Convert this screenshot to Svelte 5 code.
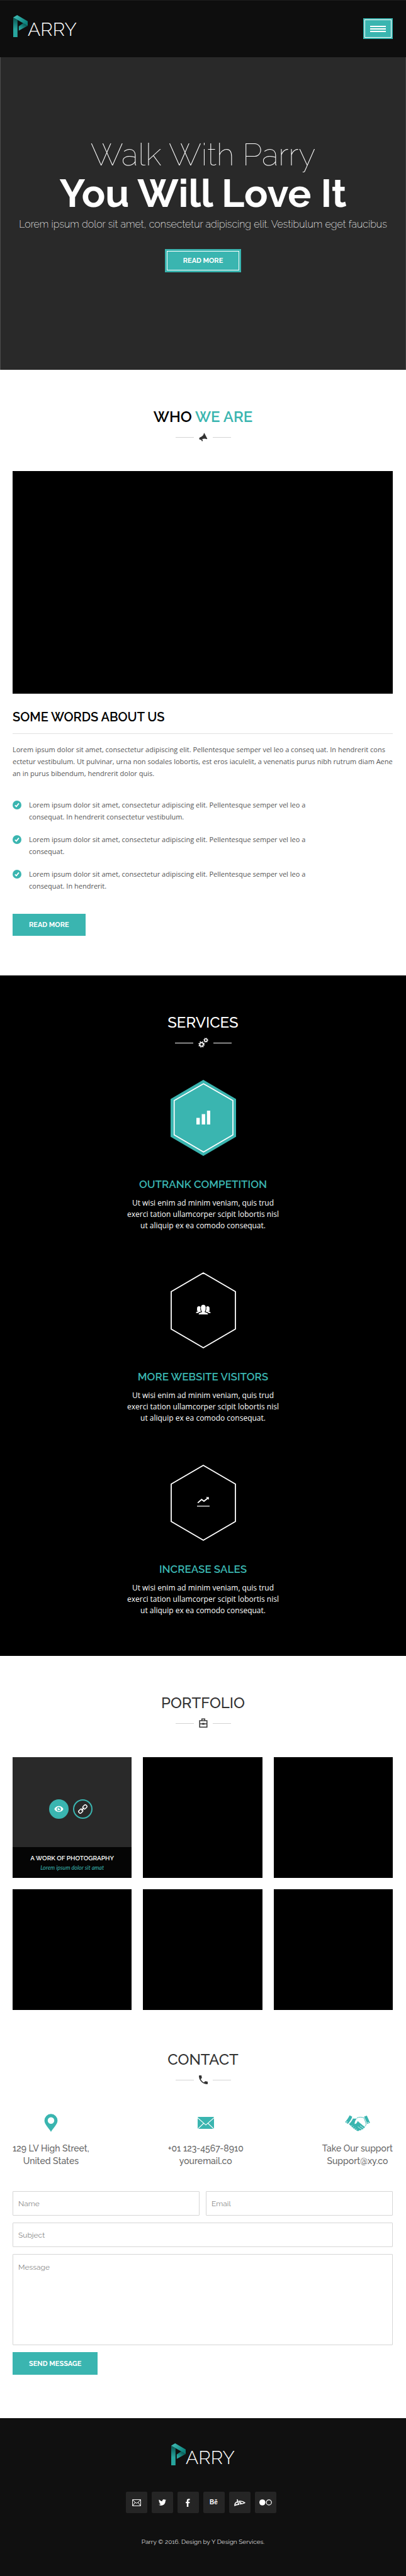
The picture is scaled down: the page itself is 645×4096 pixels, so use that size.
<script>
  const points = [
    ['Lorem ipsum dolor sit amet, consectetur adipiscing elit. Pellentesque semper vel leo a', 'consequat. In hendrerit consectetur vestibulum.'],
    ['Lorem ipsum dolor sit amet, consectetur adipiscing elit. Pellentesque semper vel leo a', 'consequat.'],
    ['Lorem ipsum dolor sit amet, consectetur adipiscing elit. Pellentesque semper vel leo a', 'consequat. In hendrerit.']
  ];
  const services = [
    { icon: 'bars', title: 'Outrank competition' },
    { icon: 'people', title: 'More website visitors' },
    { icon: 'trend', title: 'Increase sales' }
  ];
  const contacts = [
    { icon: 'pin', lines: ['129 LV High Street,', 'United States'] },
    { icon: 'mail', lines: ['+01 123-4567-8910', 'youremail.co'] },
    { icon: 'hands', lines: ['Take Our support', 'Support@xy.co'] }
  ];
  const socials = ['Email', 'Twitter', 'Facebook', 'Behance', 'DeviantArt', 'Flickr'];
</script>

{#snippet logo(id)}
  <a class="logo" href="#top" aria-label="Parry">
    <svg width="23" height="35" viewBox="0 0 81 123" aria-hidden="true">
      <defs>
        <linearGradient id="{id}-stem" x1="0" y1="0" x2="0" y2="1">
          <stop offset="0.1" stop-color="#0c615c" />
          <stop offset="0.6" stop-color="#27a59e" />
        </linearGradient>
        <linearGradient id="{id}-top" x1="0" y1="0" x2="1" y2="0.6">
          <stop offset="0.1" stop-color="#3fbcb5" />
          <stop offset="1" stop-color="#0b817b" />
        </linearGradient>
        <linearGradient id="{id}-fold" x1="1" y1="0" x2="0" y2="1">
          <stop offset="0.2" stop-color="#0a5a56" />
          <stop offset="0.8" stop-color="#27a59e" />
        </linearGradient>
      </defs>
      <path d="M0 13 24 27V123H0Z" fill="url(#{id}-stem)" />
      <path d="M56 45 81 60 31 87V62Z" fill="url(#{id}-fold)" />
      <path d="M0 13 22 0 81 34V60Z" fill="url(#{id}-top)" />
    </svg>
    <span>ARRY</span>
  </a>
{/snippet}

<header class="bar" id="top">
  {@render logo('head')}
  <button class="menu" aria-label="Menu"><span></span><span></span><span></span></button>
</header>

<section class="hero">
  <h1><span class="thin">Walk With Parry</span><span class="heavy">You Will Love It</span></h1>
  <p>Lorem ipsum dolor sit amet, consectetur adipiscing elit. Vestibulum eget faucibus</p>
  <a class="btn framed" href="#about"><span>READ MORE</span></a>
</section>

<main>
  <section id="about">
    <div class="title strong">
      <h2>WHO <em>WE ARE</em></h2>
      <div class="rule">
        <svg width="14" height="14" viewBox="0 0 14 14" aria-hidden="true">
          <path d="M8.6 0.4 13.4 9.8 12.3 10.2C9.6 9 7.3 9.3 5.2 10.3L6.4 13 4.9 13.7 3.3 11C1.8 11.6 0.6 10.8 0.5 9.4 0.4 8.1 1.2 7.3 2.6 6.9 5.4 5.9 7.4 4.2 8 0.8Z" fill="#333" />
        </svg>
      </div>
    </div>
    <div class="wrap">
      <div class="video"></div>
      <h3>SOME WORDS ABOUT US</h3>
      <p class="copy">
        Lorem ipsum dolor sit amet, consectetur adipiscing elit. Pellentesque semper vel leo a conseq uat. In hendrerit cons<br />
        ectetur vestibulum. Ut pulvinar, urna non sodales lobortis, est eros iaculelit, a venenatis purus nibh rutrum diam Aene<br />
        an in purus bibendum, hendrerit dolor quis.
      </p>
      <ul class="points">
        {#each points as [first, second]}
          <li>
            <svg width="14" height="14" viewBox="0 0 14 14" aria-hidden="true">
              <circle cx="7" cy="7" r="7" fill="#3ab5b0" />
              <path d="M3.8 7.3 6 9.4 10 4.4" fill="none" stroke="#fff" stroke-width="1.8" />
            </svg>
            <span>{first}<br />{second}</span>
          </li>
        {/each}
      </ul>
      <a class="btn" href="#about">READ MORE</a>
    </div>
  </section>

  <section class="services">
    <div class="title light">
      <h2>SERVICES</h2>
      <div class="rule">
        <svg width="16" height="16" viewBox="0 0 16 16" fill="none" stroke="#fff" aria-hidden="true">
          <circle cx="5.2" cy="10.7" r="2.8" stroke-width="1.7" />
          <circle cx="5.2" cy="10.7" r="4.3" stroke-width="1.5" stroke-dasharray="1.69" />
          <circle cx="12" cy="3.9" r="2.1" stroke-width="1.5" />
          <circle cx="12" cy="3.9" r="3.2" stroke-width="1.2" stroke-dasharray="1.26" />
        </svg>
      </div>
    </div>
    <ul>
      {#each services as s}
        <li>
          <svg class="hex" width="104" height="121" viewBox="0 0 104 121" aria-hidden="true">
            {#if s.icon === 'bars'}
              <path d="M52 0 104 30.5V90.5L52 121 0 90.5V30.5Z" fill="#3ab5b0" />
              <path d="M52.3 6.2 99 33V87.5L52.3 114.8 5.7 87.5V33Z" fill="none" stroke="#fff" stroke-width="1.7" />
              <path d="M41 60.5h5.4V71H41ZM49.5 54.5h5.5V71h-5.5ZM57.8 49h5.2V71h-5.2Z" fill="#fff" />
            {:else}
              <path d="M52 1 103 30.7V90.3L52 120 1 90.3V30.7Z" fill="none" stroke="#fff" stroke-width="1.8" />
              {#if s.icon === 'people'}
                <g fill="#fff">
                  <path d="M44.5 67c.3-2.2 2-2.7 5.2-3.4v-1.5c-1-1-1.2-2.2-1.3-3.2-.7-4.5.4-7.2 3.6-7.2s4.3 2.7 3.6 7.2c-.1 1-.3 2.2-1.3 3.2v1.5c3.2.7 4.9 1.2 5.2 3.4Z" />
                  <path d="M40.3 64.7c.2-1.6 1.2-2 3.3-2.4v-.8c-1 0-1.9-.2-1.9-.5.8-1 .2-2.7.4-4.2.2-1.8 1.3-2.8 2.8-2.8 1.3 0 2.2.6 2.6 1.8-.7 2.2-.2 4.700.9 6.6-2 .5-3.600 1-4.600 2.300Z" />
                  <path d="M63.700 64.700c-.2-1.600-1.200-2-3.300-2.400v-.8c1 0 1.900-.2 1.900-.5-.8-1-.2-2.700-.4-4.200-.2-1.800-1.300-2.800-2.800-2.800-1.300 0-2.200.6-2.600 1.800.7 2.200.2 4.700-.9 6.600 2 .5 3.600 1 4.600 2.300Z" />
                </g>
              {:else}
                <path d="M43.2 60.6 49.3 55.2 53 58 59 53.2" fill="none" stroke="#fff" stroke-width="1.9" />
                <path d="M56 51.5h4.8v4.3ZM42 65.2h20v1.3H42Z" fill="#fff" />
              {/if}
            {/if}
          </svg>
          <h3>{s.title}</h3>
          <p>Ut wisi enim ad minim veniam, quis trud<br />exerci tation ullamcorper scipit lobortis nisl<br />ut aliquip ex ea comodo consequat.</p>
        </li>
      {/each}
    </ul>
  </section>

  <section class="portfolio">
    <div class="title">
      <h2>PORTFOLIO</h2>
      <div class="rule">
        <svg width="14" height="16" viewBox="0 0 14 16" aria-hidden="true">
          <path d="M1.2 4h11.6v10.3H1.2ZM4.7 3.8V1.2h4.6v2.6M1 9h12" fill="none" stroke="#333" stroke-width="1.5" />
          <rect x="5.2" y="7.6" width="3.6" height="2.8" fill="#333" />
        </svg>
      </div>
    </div>
    <div class="wrap grid">
      <article class="tile open">
        <div class="acts">
          <a class="round solid" href="#view" aria-label="View">
            <svg width="15" height="15" viewBox="0 0 24 24" aria-hidden="true">
              <path d="M12 4.5C7 4.5 2.7 7.6.5 12c2.200 4.400 6.500 7.500 11.500 7.500s9.300-3.100 11.500-7.500C21.300 7.600 17 4.500 12 4.500Z" fill="#fff" />
              <circle cx="12" cy="12" r="5.400" fill="#3ab5b0" />
              <circle cx="12" cy="12" r="3.200" fill="#fff" />
              <path d="M12 12V8h4v4Z" fill="#3ab5b0" />
            </svg>
          </a>
          <a class="round" href="#link" aria-label="Link">
            <svg width="15" height="15" viewBox="0 0 24 24" aria-hidden="true">
              <g transform="rotate(-45 12 12)" fill="none" stroke="#fff" stroke-width="2.4">
                <rect x="-1" y="8" width="11" height="8" rx="3.5" />
                <rect x="14" y="8" width="11" height="8" rx="3.5" />
                <path d="M7 12h10" />
              </g>
            </svg>
          </a>
        </div>
        <div class="cap"><h3>A WORK OF PHOTOGRAPHY</h3><p>Lorem ipsum dolor sit amat</p></div>
      </article>
      {#each [2, 3, 4, 5, 6] as n (n)}<article class="tile"></article>{/each}
    </div>
  </section>

  <section class="contact">
    <div class="title">
      <h2>CONTACT</h2>
      <div class="rule">
        <svg width="14" height="14" viewBox="3 3 18 18" aria-hidden="true">
          <path d="M6.62 10.79c1.44 2.83 3.76 5.14 6.59 6.59l2.2-2.2c.27-.27.67-.36 1.02-.24 1.12.37 2.33.57 3.57.57.55 0 1 .45 1 1V20c0 .55-.45 1-1 1-9.39 0-17-7.61-17-17 0-.55.45-1 1-1h3.5c.55 0 1 .45 1 1 0 1.25.2 2.45.57 3.57.11.35.03.74-.25 1.02l-2.2 2.2z" fill="#333" />
        </svg>
      </div>
    </div>
    <div class="wrap">
      <ul class="ways">
        {#each contacts as c}
          <li>
            {#if c.icon === 'pin'}
              <svg width="22" height="29" viewBox="0 0 22 29" aria-hidden="true"><path d="M11 .3A10.4 10.4 0 0 0 .6 10.8C.6 17 7 22 11 28.7 15 22 21.4 17 21.4 10.8A10.4 10.4 0 0 0 11 .3ZM11 5.6a5.2 5.2 0 1 1 0 10.4 5.2 5.2 0 0 1 0-10.4Z" fill="#3ab5b0" /></svg>
            {:else if c.icon === 'mail'}
              <svg width="26" height="29" viewBox="0 0 26 29" aria-hidden="true">
                <rect y="5" width="26" height="19" rx="1" fill="#3ab5b0" />
                <path d="M0 6.5 13 17.8 26 6.5M.5 23.8 9.8 15M25.5 23.8 16.2 15" fill="none" stroke="#fff" stroke-width="1.1" />
              </svg>
            {:else}
              <svg width="40" height="29" viewBox="0 0 40 29" fill="#3ab5b0" aria-hidden="true">
                <path d="M7.5 2.5 11.6 4.8C10 9.5 7.8 12.5 4.7 16L.3 13.3C3 9.8 5.4 7 7.5 2.5ZM30.5 4.4 34.8 3 39.8 14.2 35.5 16.2ZM3 12.3a.8.8 0 1 0 .1 0ZM36.8 13.2a.8.8 0 1 0 .1 0Z" fill-rule="evenodd" />
                <path d="M12.8 7.5C15 8 17 7.8 19 7.2 16.8 9.8 15.5 12.5 15.3 16.2 17.5 16.4 19.2 14.5 20.3 11.5 23.5 14.8 28 18 31.5 20.8 31.9 22.3 30.5 23.3 29.3 22.7 29.6 24.5 28 25.3 26.5 24.5 26.5 26.3 24.5 27 23 26 22.8 27.4 20.5 28 18.5 26.7 16 25 12 22.5 9.2 19.2 8 17.8 7 17 6.3 16.4 9.5 13.5 11.5 10.5 12.8 7.5Z" />
                <path d="M19 6.9C22 4.8 26.5 5.2 30.3 6.6L33.8 16.3C33.3 18 32.7 19 31.7 20" fill="none" stroke="#3ab5b0" stroke-width=".9" />
                <path d="M9 20.5 11.5 18.3M11.6 22.7 14 20.2M14.3 24.8 16.6 22.3M17 26.7 19 24.3M20.5 20.5 26.5 24.7M24 19 29.5 23" fill="none" stroke="#fff" stroke-width=".7" />
              </svg>
            {/if}
            <p>{c.lines[0]}<br />{c.lines[1]}</p>
          </li>
        {/each}
      </ul>
      <form onsubmit={(e) => e.preventDefault()}>
        <input aria-label="Name" placeholder="Name" />
        <input type="email" aria-label="Email" placeholder="Email" />
        <input class="full" aria-label="Subject" placeholder="Subject" />
        <textarea class="full" aria-label="Message" placeholder="Message"></textarea>
        <button class="btn send">SEND MESSAGE</button>
      </form>
    </div>
  </section>
</main>

<footer>
  {@render logo('foot')}
  <ul class="social">
    {#each socials as s}
      <li>
        <a href="#{s}" aria-label={s}>
          {#if s === 'Email'}
            <svg width="14" height="11" viewBox="0 0 14 11" fill="none" stroke="#fff" aria-hidden="true"><path d="M.6.6h12.8v9.8H.6ZM.8.8 5.8 6h2.4L13.2.8M.8 10.2 4.7 5M13.2 10.2 9.3 5" /></svg>
          {:else if s === 'Twitter'}
            <svg width="12" height="12" viewBox="0 2 24 20" aria-hidden="true"><path d="M23.95 4.57a10 10 0 0 1-2.82.77 4.96 4.96 0 0 0 2.16-2.72c-.95.55-2 .96-3.13 1.18a4.92 4.92 0 0 0-8.38 4.48C7.69 8.1 4.07 6.13 1.64 3.16a4.92 4.92 0 0 0 1.52 6.57 4.9 4.9 0 0 1-2.23-.61v.06c0 2.38 1.7 4.37 3.95 4.82a5 5 0 0 1-2.21.08 4.94 4.94 0 0 0 4.6 3.42A9.87 9.87 0 0 1 0 19.54a13.99 13.99 0 0 0 7.56 2.21c9.05 0 14-7.5 14-13.98 0-.21 0-.42-.02-.63a9.94 9.94 0 0 0 2.46-2.55Z" fill="#fff" /></svg>
          {:else if s === 'Facebook'}
            <svg width="7" height="13" viewBox="0 0 7 13" aria-hidden="true"><path d="M1.8 13V7.2H.2V4.9h1.6V3.3C1.8 1.3 2.9.2 4.9.2c.8 0 1.5 0 1.7.1v2.1H5.4c-.8 0-1.1.4-1.1 1.1v1.4h2.2l-.3 2.3H4.3V13Z" fill="#fff" /></svg>
          {:else if s === 'Behance'}
            <span>Bē</span>
          {:else if s === 'DeviantArt'}
            <svg width="18" height="11" viewBox="0 0 18 11" fill="none" stroke="#fff" aria-hidden="true">
              <path d="M4.8.3 7.2 8.2C5 8.4 2.8 9 1.1 9.8.8 6.8 3 4.4 6 3.8" stroke-width="1.7" />
              <path d="M7 3.3C11 2.6 14.5 3.5 16.8 5.6 14.5 6.8 12 7.3 9.6 7.6L8.6 4.3 12.3 7" stroke-width="1.4" />
            </svg>
          {:else}
            <svg width="20" height="10" viewBox="0 0 20 10" aria-hidden="true"><circle cx="4.8" cy="5" r="4.8" fill="#fff" /><circle cx="15.2" cy="5" r="4.1" fill="none" stroke="#fff" stroke-width="1.2" /></svg>
          {/if}
        </a>
      </li>
    {/each}
  </ul>
  <p>Parry © 2016. Design by Y Design Services.</p>
</footer>

<style>
  :global(body) { margin: 0; background: #fff; font-family: Raleway, Lato, sans-serif; }
  h1, h2, h3, p, ul { margin: 0; padding: 0; }
  ul { list-style: none; }
  a { text-decoration: none; color: inherit; }
  svg { display: block; flex: none; }

  .bar {
    display: flex; justify-content: space-between; align-items: flex-start;
    height: 91px; box-sizing: border-box; padding: 24px 21px 0;
    background: #0e0e0e; box-shadow: inset 0 1px #1d1d1d;
  }
  .logo { display: inline-flex; align-items: flex-end; color: #fff; }
  .logo span { font-size: 30px; line-height: 25px; font-weight: 300; }
  .menu {
    display: flex; flex-direction: column; align-items: center; justify-content: center; gap: 2px;
    width: 47px; height: 33px; margin-top: 5px; padding: 0; border: 0;
    background: #3ab5b0; outline: 1px solid #fff; outline-offset: -3px;
  }
  .menu span { width: 25px; height: 2px; background: #fff; }

  .hero {
    padding: 127px 0 155px; text-align: center; color: #fff; background: #292929;
    box-shadow: inset 1px 0 #4c4c4c, inset -1px 0 #3c3c3c;
  }
  .hero h1 span { display: block; }
  .thin { font-size: 50px; line-height: 56px; font-weight: 100; }
  .heavy { font-size: 62px; line-height: 68px; font-weight: 700; }
  .hero p { margin: 3px 0 27px; font-size: 16px; line-height: 24px; font-weight: 200; }

  .btn {
    display: inline-block; box-sizing: border-box; height: 35px; padding: 0 26px; border: 0;
    background: #3ab5b0; color: #fff; font: 700 11px/35px Raleway, Lato, sans-serif;
  }
  .framed { height: 37px; padding: 3px; vertical-align: top; }
  .framed span { display: block; padding: 0 25px; border: 1px solid #fff; line-height: 29px; }

  .title { padding: 60px 0 46px; text-align: center; color: #333; }
  h2 { font-size: 24px; line-height: 30px; font-weight: 500; }
  h2 em { font-style: normal; color: #3ab5b0; }
  .strong h2 { font-weight: 600; color: #000; }
  .light { color: #fff; }
  .rule { display: flex; align-items: center; justify-content: center; gap: 8px; height: 16px; margin-top: 9px; }
  .rule::before, .rule::after { content: ''; width: 29px; height: 1px; background: #d4d4d4; }
  .light .rule::before, .light .rule::after { background: #fff; }

  .wrap { padding: 0 21px 0 20px; }
  .video { aspect-ratio: 604 / 354; background: #000; }
  #about { padding-bottom: 63px; }
  #about h3 {
    margin-top: 24px; padding-bottom: 13px; border-bottom: 1px solid #e2e2e2;
    font-size: 20px; line-height: 26px; font-weight: 600; color: #000;
  }
  .copy, .points { font: 400 11px/19px 'Open Sans', sans-serif; color: #555; white-space: nowrap; }
  .copy { margin: 15px 0 31px; }
  .points { display: flex; flex-direction: column; gap: 17px; margin-bottom: 35px; }
  .points li { display: flex; gap: 12px; }
  .points svg { margin-top: 3px; }
  #about .btn { display: block; width: fit-content; }

  .services { background: #000; padding-bottom: 63px; text-align: center; }
  .services ul { display: flex; flex-direction: column; gap: 65px; padding-top: 5px; }
  .hex { margin: 0 auto 34px; }
  .services h3 { margin-bottom: 10px; font-size: 17px; line-height: 22px; font-weight: 600; text-transform: uppercase; color: #3ab5b0; }
  .services p { font: 400 12px/18px 'Open Sans', sans-serif; color: #fff; }

  .grid { display: grid; grid-template-columns: repeat(3, 1fr); gap: 18px; }
  .tile { height: 192px; background: #000; }
  .open { display: flex; flex-direction: column; background: #292929; text-align: center; }
  .acts { flex: 1; display: flex; justify-content: center; align-items: flex-end; gap: 7px; padding: 0 4px 45px 0; }
  .round {
    display: flex; align-items: center; justify-content: center; box-sizing: border-box;
    width: 31px; height: 31px; border: 2px solid #3ab5b0; border-radius: 50%;
  }
  .solid { background: #3ab5b0; }
  .cap { height: 49px; background: #050505; }
  .cap h3 { padding-top: 10px; font-size: 10px; line-height: 15px; font-weight: 600; color: #fff; }
  .cap p { font: italic 400 9px/15px Lato, sans-serif; color: #3ab5b0; }

  .contact { padding: 4px 0 69px; }
  .ways { display: flex; justify-content: space-between; margin-bottom: 38px; text-align: center; }
  .ways svg { margin: 0 auto 16px; }
  .ways p { font-size: 14px; line-height: 20px; font-weight: 500; color: #666; }
  form { display: grid; grid-template-columns: 1fr 1fr; gap: 11px 10px; }
  input, textarea {
    box-sizing: border-box; width: 100%; height: 39px; margin: 0; padding: 0 8px;
    border: 1px solid #d6d6d6; border-radius: 1px; background: #fff; color: #333;
    font: 400 12px/16px Raleway, Lato, sans-serif; outline: 0;
  }
  textarea { height: 145px; padding-top: 12px; resize: none; display: block; }
  ::placeholder { color: #8a8a8a; opacity: 1; }
  .full { grid-column: 1 / -1; }
  .send { justify-self: start; height: 36px; }

  footer { display: flex; flex-direction: column; align-items: center; padding: 40px 0 46px; background: #101010; color: #fff; }
  .social { display: flex; margin: 42px 0 38px; }
  .social li { margin-right: 7px; }
  .social a {
    display: flex; align-items: center; justify-content: center;
    width: 34px; height: 34px; border-radius: 2px; background: #252525;
  }
  .social span { font: 700 10px/12px 'Liberation Sans', sans-serif; }
  footer p { font-size: 10px; line-height: 16px; font-weight: 400; color: #d8d8d8; }
</style>
